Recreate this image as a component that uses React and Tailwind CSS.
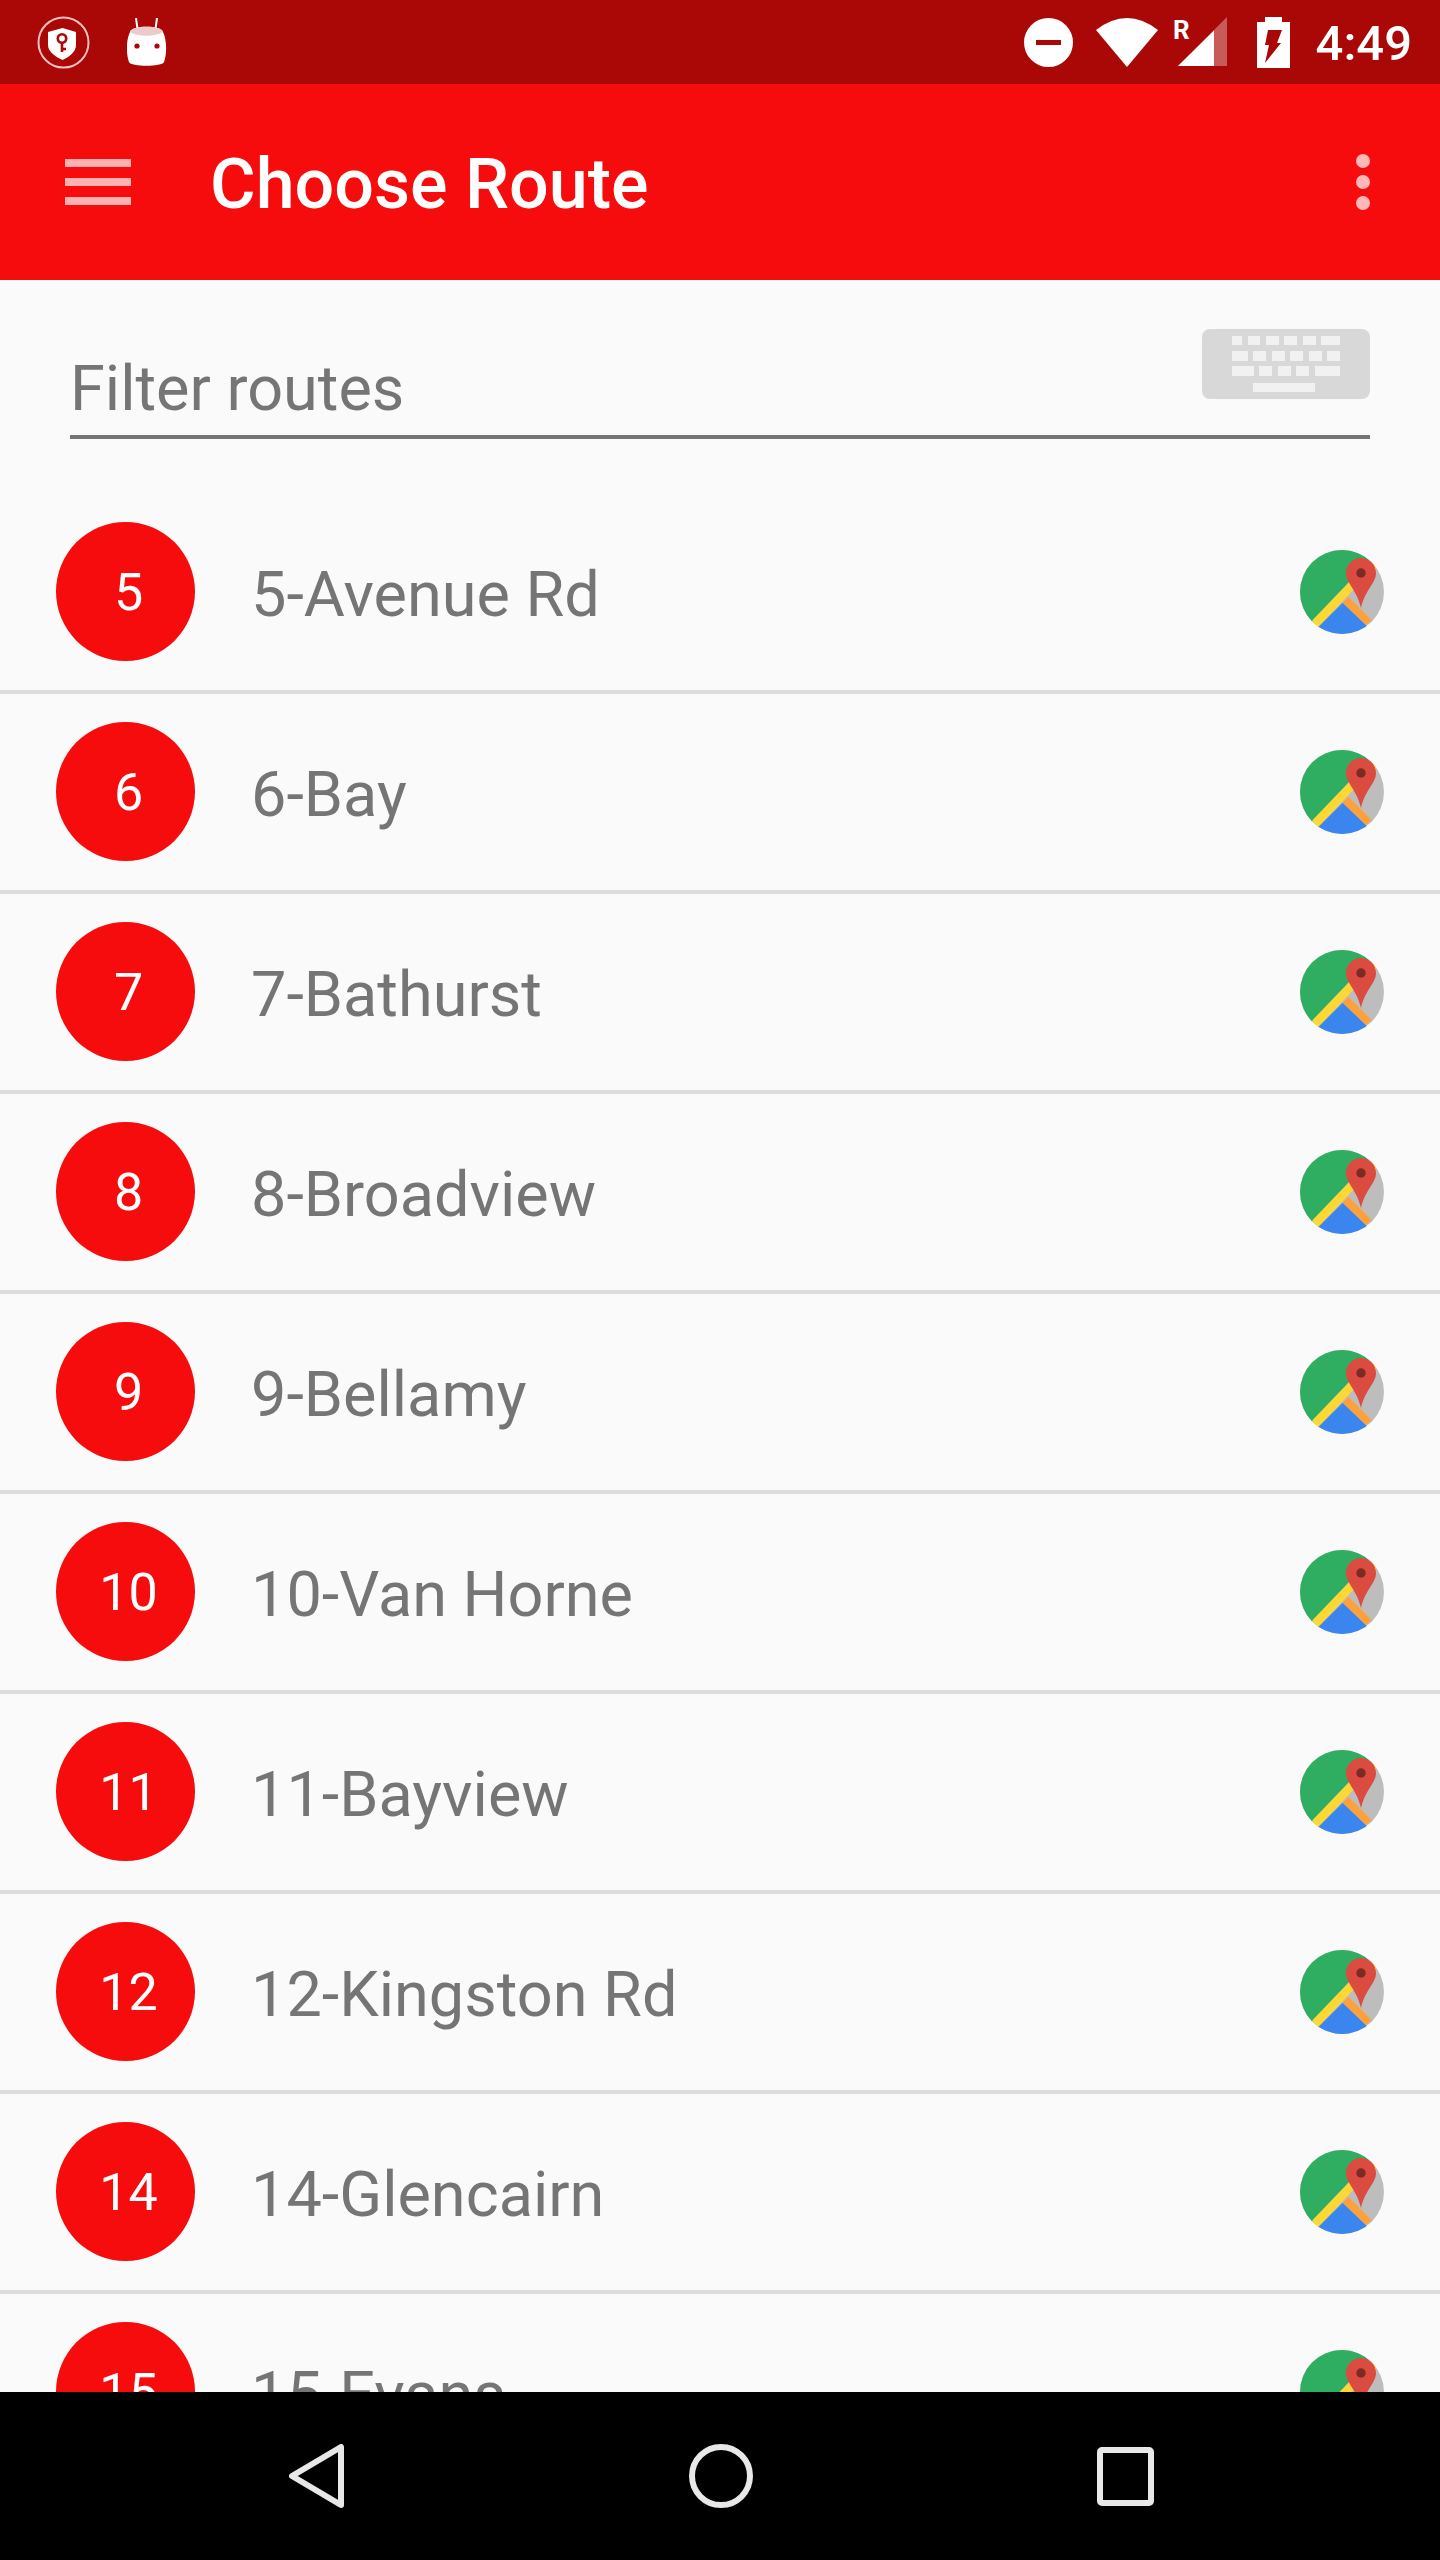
import { useId } from "react";

const routes = [
  ["5", "5-Avenue Rd"],
  ["6", "6-Bay"],
  ["7", "7-Bathurst"],
  ["8", "8-Broadview"],
  ["9", "9-Bellamy"],
  ["10", "10-Van Horne"],
  ["11", "11-Bayview"],
  ["12", "12-Kingston Rd"],
  ["14", "14-Glencairn"],
  ["15", "15-Evans"],
];

const keyRows = [
  [7, 9, [[30, 10], [46, 12], [64, 13], [82, 13], [101, 13], [119, 19]]],
  [22, 10, [[30, 16], [51, 13], [70, 13], [88, 13], [107, 13], [125, 13]]],
  [37, 10, [[30, 22], [57, 13], [76, 13], [94, 13], [113, 25]]],
  [54, 9, [[51, 62]]],
];

function ShieldIcon() {
  return (
    <svg width="53" height="53" viewBox="0 0 53 53">
      <circle cx="26.5" cy="26.5" r="25" fill="none" stroke="#f2c0c0" strokeWidth="2" />
      <path d="M25.5 12 L39 16 V29 C39 36 32 41 25.5 44 C19 41 11 36 11 29 V16 Z" fill="#fff" />
      <circle cx="25" cy="22.5" r="4.2" fill="none" stroke="#aa0707" strokeWidth="2.6" />
      <path d="M25 27 V36 M25 33 H29" stroke="#aa0707" strokeWidth="2.6" fill="none" />
    </svg>
  );
}

function RobotIcon() {
  return (
    <svg width="40" height="48" viewBox="0 0 40 48">
      <path d="M9 0 L10.5 11 M30 0 L28.5 11" stroke="#fff" strokeWidth="2" />
      <path d="M3 14 C4 7 35 7 36 14 C40 22 40 36 37 44 C35 49 4 49 2 44 C-1 36 -1 22 3 14 Z" fill="#fff" />
      <path d="M3 14 C4 7 35 7 36 14 C28 19 11 19 3 14 Z" fill="#eccbcb" />
      <circle cx="10" cy="28" r="2.6" fill="#aa0707" />
      <circle cx="30" cy="28" r="2.6" fill="#aa0707" />
    </svg>
  );
}

function DndIcon() {
  return (
    <svg width="49" height="49" viewBox="0 0 49 49">
      <circle cx="24.5" cy="24.5" r="24.5" fill="#fff" />
      <rect x="12" y="22" width="25" height="5" fill="#aa0707" />
    </svg>
  );
}

function WifiIcon() {
  return (
    <svg width="62" height="49" viewBox="0 0 62 49">
      <path d="M31 49 L0 12 Q31 -12 62 12 Z" fill="#fff" />
    </svg>
  );
}

function SignalIcon() {
  return (
    <svg width="54" height="50" viewBox="0 0 54 50">
      <path d="M5 49 L54 0 V49 Z" fill="#c85a5a" />
      <path d="M5 49 L41 13.5 V49 Z" fill="#fff" />
      <text x="0" y="22" fill="#fff" fontSize="26" fontWeight="700" fontFamily="Roboto, sans-serif">R</text>
    </svg>
  );
}

function BatteryIcon() {
  return (
    <svg width="33" height="51" viewBox="0 0 33 51">
      <path d="M8 0 H25 V5 H33 V51 H0 V5 H8 Z" fill="#fff" />
      <path d="M11 13 H25 L20 26 H24 L8 46 L12 28 H8 Z" fill="#aa0707" />
    </svg>
  );
}

function KeyboardIcon() {
  return (
    <svg width="168" height="70" viewBox="0 0 168 70">
      <rect width="168" height="70" rx="8" fill="#d8d8d8" />
      {keyRows.map(([y, h, keys]) =>
        keys.map(([x, w]) => <rect key={`${y}-${x}`} x={x} y={y} width={w} height={h} fill="#f1f1f1" />)
      )}
    </svg>
  );
}

function MapsIcon() {
  const clip = useId();
  return (
    <svg width="84" height="84" viewBox="0 0 84 84" className="shrink-0">
      <clipPath id={clip}>
        <circle cx="42" cy="42" r="42" />
      </clipPath>
      <g clipPath={`url(#${clip})`}>
        <rect width="84" height="84" fill="#bdbdbd" />
        <path d="M0 0 H78 L48 33 L12 71 L0 84 Z" fill="#2fae62" />
        <path d="M12.7 70 L48.3 33.3 L78 6 L84 12 L53 40 L19.3 76 L14 84 Z" fill="#fdd835" />
        <path d="M42.7 52.7 L19.3 76 L10 84 H72 L66 75 Z" fill="#3b86ee" />
        <path d="M42.7 52.7 L48.3 46.7 L71.7 70 L66 75 Z" fill="#ffa13a" />
      </g>
      <path d="M61 8 C69.5 8 76 14.7 76 23 C76 33 65 40 61 58 C57 40 46 33 46 23 C46 14.7 52.5 8 61 8 Z" fill="#db4b3f" />
      <circle cx="61" cy="23" r="4.7" fill="#7b2a25" />
    </svg>
  );
}

function RouteRow({ number, name }) {
  return (
    <div className="flex h-[200px] shrink-0 items-center border-b-4 border-[#dcdcdc] pl-[56px] pr-[56px]">
      <div className="mb-[2px] flex h-[139px] w-[139px] shrink-0 items-center justify-center rounded-full bg-[#f60c0c] pl-[6px] pt-[3px] text-[52px] text-white">
        {number}
      </div>
      <div className="ml-[56px] flex-1 pt-[6px] text-[63px] text-[#757575]">{name}</div>
      <MapsIcon />
    </div>
  );
}

export default function App() {
  return (
    <div className="flex h-[2560px] w-[1440px] flex-col overflow-hidden bg-[#fafafa] font-['Roboto',sans-serif]">
      <div className="flex h-[84px] shrink-0 items-center bg-[#aa0707] pl-[37px] pr-[28px]">
        <ShieldIcon />
        <div className="ml-[37px]">
          <RobotIcon />
        </div>
        <div className="ml-auto flex items-center">
          <DndIcon />
          <div className="ml-[23px]"><WifiIcon /></div>
          <div className="ml-[15px]"><SignalIcon /></div>
          <div className="ml-[30px]"><BatteryIcon /></div>
          <div className="ml-[26px] pt-[3px] text-[49px] font-medium text-white">4:49</div>
        </div>
      </div>

      <div className="flex h-[196px] shrink-0 items-center bg-[#f60c0c] pl-[65px] pr-[70px]">
        <div className="flex w-[66px] flex-col gap-[11px]">
          <div className="h-[8px] bg-[#ffb0b0]" />
          <div className="h-[8px] bg-[#ffb0b0]" />
          <div className="h-[8px] bg-[#ffb0b0]" />
        </div>
        <div className="ml-[79px] flex-1 pt-[5px] text-[70px] font-medium text-white">Choose Route</div>
        <div className="flex flex-col gap-[7px]">
          <div className="h-[14px] w-[14px] rounded-full bg-[#ffb8b8]" />
          <div className="h-[14px] w-[14px] rounded-full bg-[#ffb8b8]" />
          <div className="h-[14px] w-[14px] rounded-full bg-[#ffb8b8]" />
        </div>
      </div>

      <div className="h-[214px] shrink-0 px-[70px] pt-[49px]">
        <div className="flex h-[110px] items-start justify-between border-b-4 border-[#757575]">
          <div className="pt-[23px] text-[63px] leading-[74px] text-[#757575]">Filter routes</div>
          <KeyboardIcon />
        </div>
      </div>

      <div className="flex flex-1 flex-col overflow-hidden">
        {routes.map(([number, name]) => (
          <RouteRow key={name} number={number} name={name} />
        ))}
      </div>

      <div className="flex h-[168px] shrink-0 items-center bg-black pl-[289px]">
        <svg width="55" height="64" viewBox="0 0 55 64">
          <path d="M52 3 V61 L3 32 Z" fill="none" stroke="#e8e8e8" strokeWidth="6" strokeLinejoin="round" />
        </svg>
        <svg width="64" height="64" viewBox="0 0 64 64" className="ml-[345px]">
          <circle cx="32" cy="32" r="29" fill="none" stroke="#e8e8e8" strokeWidth="6" />
        </svg>
        <svg width="57" height="59" viewBox="0 0 57 59" className="ml-[344px]">
          <rect x="3" y="3" width="51" height="53" rx="2" fill="none" stroke="#e8e8e8" strokeWidth="6" />
        </svg>
      </div>
    </div>
  );
}
